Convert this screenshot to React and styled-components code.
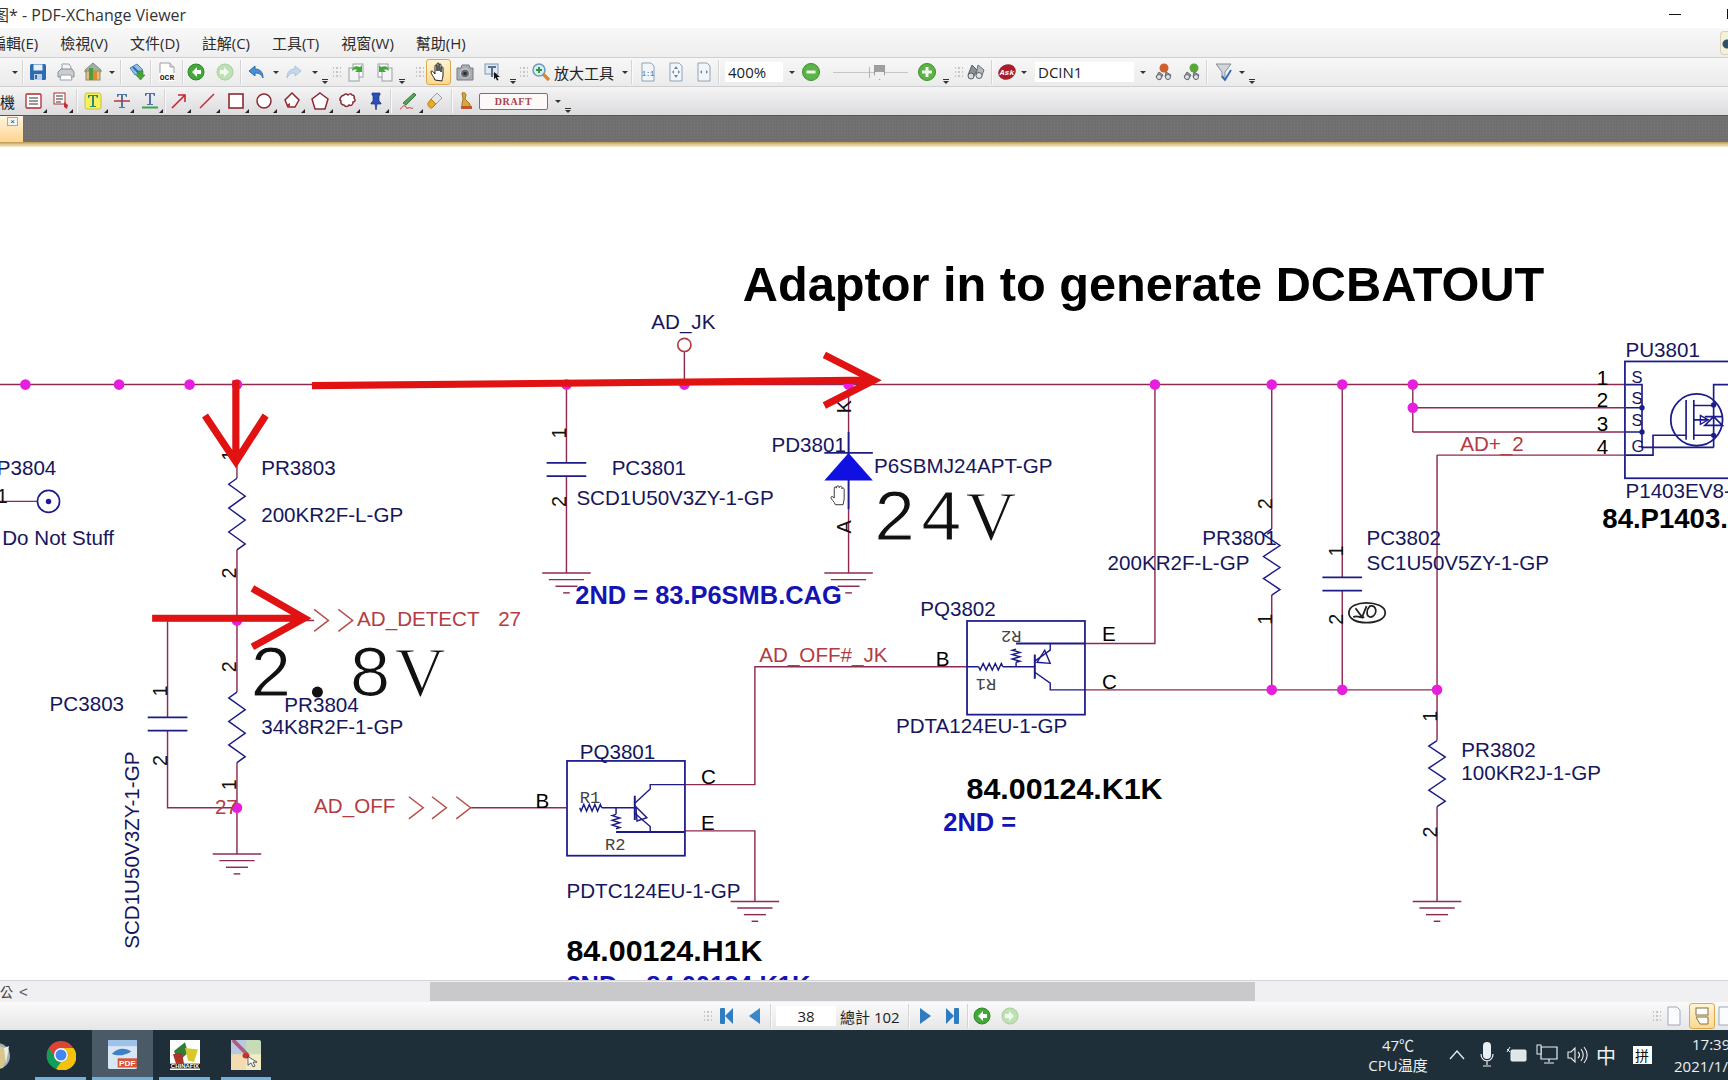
import styled, { createGlobalStyle } from 'styled-components'

const GlobalStyle = createGlobalStyle`
  html, body {
    margin: 0;
    padding: 0;
    background: #fff;
    overflow: hidden;
  }
  * {
    box-sizing: border-box;
  }
`

const uiFont = `"Open Sans", "Noto Sans CJK TC", sans-serif`

const Page = styled.div`
  width: 1728px;
  height: 1080px;
  display: flex;
  flex-direction: column;
  overflow: hidden;
  font-family: ${uiFont};
  color: #222;
`

const TitleBar = styled.div`
  height: 28px;
  flex: none;
  display: flex;
  align-items: center;
  background: #fff;
  overflow: hidden;
  font-family: "Open Sans", "Noto Sans CJK SC", sans-serif;
  font-size: 16px;
  color: #333;
`
const TitleText = styled.span`
  flex: none;
  width: 192px;
  margin-left: -7px;
  white-space: nowrap;
`
const Minimize = styled.span`
  flex: none;
  width: 12px;
  height: 1px;
  background: #111;
  margin-left: 1484px;
`
const MaxEdge = styled.span`
  flex: none;
  width: 2px;
  height: 10px;
  background: #111;
  margin-left: 46px;
`

const MenuBar = styled.div`
  height: 30px;
  flex: none;
  display: flex;
  align-items: center;
  gap: 22px;
  padding-left: 0;
  background: linear-gradient(#f8f8f8, #eeeeef);
  border-bottom: 1px solid #cfcfd2;
  font-size: 15px;
  color: #2b2b2b;
  overflow: hidden;
`
const MenuItem = styled.span`
  white-space: nowrap;
  &:first-child {
    margin-left: -9px;
  }
`
const HelpBadge = styled.span`
  margin-left: auto;
  width: 8px;
  height: 24px;
  border: 1px solid #d8d2b8;
  border-right: 0;
  border-radius: 4px 0 0 4px;
  background: radial-gradient(circle at 6px 12px, #31506b 0 4px, #f5f0d8 5px);
`

const Toolbar = styled.div`
  height: ${(p) => p.$h}px;
  flex: none;
  display: flex;
  align-items: center;
  overflow: hidden;
  background: ${(p) => p.$bg};
  border-bottom: ${(p) => (p.$line ? '1px solid #cfcfd2' : '0')};
`
const Gap = styled.span`
  flex: none;
  width: ${(p) => p.$w}px;
`
const Sep = styled.span`
  flex: none;
  width: 1px;
  height: 24px;
  background: #d4d4d6;
  box-shadow: 1px 0 0 #fafafa;
`
const ToolSlot = styled.span`
  position: relative;
  flex: none;
  width: ${(p) => p.$w}px;
  height: 26px;
  display: flex;
  align-items: center;
  justify-content: center;
  ${(p) =>
    p.$active &&
    `
    border: 1px solid #d9a94f;
    border-radius: 3px;
    background: linear-gradient(#fff4d6, #fcd88f);
  `}
  ${(p) =>
    p.$corner &&
    `
    &::after {
      content: '';
      position: absolute;
      right: 1px;
      bottom: 1px;
      border-left: 4px solid transparent;
      border-bottom: 4px solid #222;
    }
  `}
`
const Caret = styled.span`
  flex: none;
  width: ${(p) => p.$w || 8}px;
  height: 8px;
  display: flex;
  align-items: center;
  justify-content: center;
  &::before {
    content: '';
    border-left: 3px solid transparent;
    border-right: 3px solid transparent;
    border-top: 3px solid #333;
  }
`
const More = styled.span`
  flex: none;
  width: ${(p) => p.$w || 10}px;
  height: 26px;
  display: flex;
  flex-direction: column;
  align-items: center;
  justify-content: flex-end;
  padding-bottom: 1px;
  &::before {
    content: '';
    width: 6px;
    height: 1px;
    background: #333;
    margin-bottom: 1px;
  }
  &::after {
    content: '';
    border-left: 3px solid transparent;
    border-right: 3px solid transparent;
    border-top: 3px solid #333;
  }
`
const Grip = styled.span`
  flex: none;
  width: ${(p) => p.$w || 12}px;
  height: 14px;
  background-image: radial-gradient(#c6c6c8 1px, transparent 1.2px);
  background-size: 4px 4px;
  background-position: center;
  background-clip: content-box;
  padding: 0 ${(p) => ((p.$w || 12) - 8) / 2}px;
`
const ToolLabel = styled.span`
  flex: none;
  width: ${(p) => p.$w}px;
  font-size: 15px;
  white-space: nowrap;
  color: #222;
`
const Field = styled.span`
  flex: none;
  width: ${(p) => p.$w}px;
  height: 20px;
  display: flex;
  align-items: center;
  justify-content: ${(p) => (p.$center ? 'center' : 'flex-start')};
  padding-left: ${(p) => (p.$center ? 0 : 3)}px;
  background: #fff;
  font-size: 15px;
  color: #222;
`
const Slider = styled.span`
  position: relative;
  flex: none;
  width: ${(p) => p.$w}px;
  height: 20px;
  &::before {
    content: '';
    position: absolute;
    left: 0;
    right: 0;
    top: 10px;
    height: 1px;
    background: #c4c4c6;
  }
`
const SliderThumb = styled.span`
  position: absolute;
  left: 41px;
  top: 3px;
  width: 11px;
  height: 15px;
  background: linear-gradient(#9aa39a 0 45%, #f0f0f0 45%);
  border: 1px solid #9a9a9a;
  clip-path: polygon(0 0, 100% 0, 100% 65%, 50% 100%, 0 65%);
`
const SliderTick = styled.span`
  position: absolute;
  left: 36px;
  top: 5px;
  width: 1px;
  height: 11px;
  background: #b5b5b8;
`
const DraftStamp = styled.span`
  flex: none;
  width: 69px;
  height: 17px;
  display: flex;
  align-items: center;
  justify-content: center;
  border: 1.5px solid #b5565c;
  border-radius: 2px;
  background: #fdf9f8;
  font-family: "Liberation Serif", serif;
  font-weight: 700;
  font-size: 10px;
  letter-spacing: 0.6px;
  color: #a8434b;
`

const TabStrip = styled.div`
  height: 27px;
  flex: none;
  display: flex;
  background-color: #6f6f70;
  background-image: radial-gradient(#7a7a7b 0.6px, transparent 0.8px);
  background-size: 3px 3px;
  border-top: 1px solid #555;
`
const DocTab = styled.div`
  width: 23px;
  background: linear-gradient(#fff6e2, #fdd48d);
  padding: 1px 0 0 7px;
`
const TabClose = styled.span`
  display: flex;
  width: 11px;
  height: 9px;
  align-items: center;
  justify-content: center;
  background: #f4f4f4;
  border: 1px solid #a8a8a8;
  font-size: 8px;
  line-height: 1;
  font-family: "Liberation Sans", sans-serif;
  color: #333;
`
const GoldLine = styled.div`
  height: 5px;
  flex: none;
  background: linear-gradient(#b8974f, #d8bf85 40%, #f4ecd8);
`

const Canvas = styled.div`
  flex: none;
  height: 833px;
  background: #fff;
  overflow: hidden;
`
const Sheet = styled.svg`
  display: block;
`

const Wire = styled.path`
  fill: none;
  stroke: ${(p) => (p.$blue ? '#1c1c86' : '#8e2a52')};
  stroke-width: ${(p) => p.$sw || 1.3};
`
const Marker = styled.path`
  fill: none;
  stroke: #e01212;
  stroke-width: 6.5;
`
const Chevron = styled.path`
  fill: none;
  stroke: #b5524f;
  stroke-width: 1.4;
`
const Junction = styled.circle`
  fill: #e61fdc;
`
const Part = styled.rect`
  fill: none;
  stroke: #1c1c8c;
  stroke-width: 1.6;
`
const Label = styled.text`
  font-family: "Liberation Sans", sans-serif;
  font-size: ${(p) => p.$size || 18.7}px;
  font-weight: ${(p) => (p.$bold ? 700 : 400)};
  fill: ${(p) =>
    p.$tone === 'red'
      ? '#b23c42'
      : p.$tone === 'blue'
        ? '#1414b4'
        : p.$tone === 'black'
          ? '#000'
          : '#16165e'};
`
const PinNum = styled.text`
  font-family: "Liberation Sans", sans-serif;
  font-size: 18px;
  fill: #111;
  text-anchor: middle;
  dominant-baseline: central;
`
// white stroke over the fill thins the glyphs down to the hairline look of the reference
const BigVolt = styled.text`
  font-family: "Liberation Mono", monospace;
  font-size: 66px;
  letter-spacing: 2.5px;
  fill: #111;
  stroke: #fff;
  stroke-width: 1.1;
`
const VoltUnit = styled.tspan`
  font-family: "Liberation Serif", serif;
  font-size: 64px;
`
const Tiny = styled.text`
  font-family: "Liberation Mono", monospace;
  font-size: 15.5px;
  fill: #444;
`

const ScrollBar = styled.div`
  height: 22px;
  flex: none;
  display: flex;
  align-items: center;
  background: #f0eff1;
  border-top: 1px solid #d4d3d6;
`
const ScrollStub = styled.span`
  flex: none;
  width: 19px;
  font-size: 13px;
  color: #444;
  font-family: "Noto Sans CJK TC", sans-serif;
`
const ScrollLeft = styled.span`
  flex: none;
  width: 411px;
  font-size: 15px;
  color: #555;
  font-family: "Liberation Sans", sans-serif;
`
const ScrollThumb = styled.span`
  flex: none;
  width: 825px;
  height: 19px;
  background: #c9c8ca;
`

const StatusBar = styled.div`
  height: 28px;
  flex: none;
  display: flex;
  align-items: center;
  padding-left: 702px;
  overflow: hidden;
  background: linear-gradient(#fafafa, #e6e6e8);
`
const PageTotal = styled.span`
  flex: none;
  width: 60px;
  font-size: 15px;
  white-space: nowrap;
  color: #222;
`

const Taskbar = styled.div`
  height: 50px;
  flex: none;
  display: flex;
  background: #1f2f3a;
  overflow: hidden;
`
const StartStub = styled.span`
  flex: none;
  width: 35px;
  display: flex;
  align-items: center;
  padding-top: 2px;
`
const TaskButton = styled.span`
  flex: none;
  width: ${(p) => p.$w}px;
  margin-right: ${(p) => p.$gap || 0}px;
  display: flex;
  align-items: center;
  justify-content: center;
  padding-top: 2px;
  background: ${(p) => (p.$active ? '#4a5a67' : 'transparent')};
  border-bottom: 3px solid #76b0d8;
`
const Spacer = styled.span`
  flex: 1;
`
const TempBlock = styled.span`
  flex: none;
  width: 64px;
  margin-right: 15px;
  display: flex;
  flex-direction: column;
  align-items: center;
  justify-content: center;
  color: #e9eff3;
  font-size: 15px;
  line-height: 20px;
`
const TrayCell = styled.span`
  flex: none;
  width: ${(p) => p.$w}px;
  display: flex;
  align-items: center;
  justify-content: center;
  color: #eef2f5;
  font-size: 20px;
`
const ImeBox = styled.span`
  width: 19px;
  height: 18px;
  display: flex;
  align-items: center;
  justify-content: center;
  background: #fff;
  color: #111;
  font-size: 14px;
`
const Clock = styled.span`
  flex: none;
  width: 54px;
  margin-left: 16px;
  display: flex;
  flex-direction: column;
  justify-content: center;
  color: #e9eff3;
  font-size: 15px;
  line-height: 22px;
  white-space: nowrap;
`
const ClockTime = styled.span`
  margin-left: 18px;
`

const tiny = { fontFamily: 'Liberation Mono, monospace' }

const glyphs = {
  save: (
    <>
      <rect x="2" y="2" width="16" height="16" rx="1.5" fill="#2d6cb3" />
      <rect x="5.5" y="2.5" width="9" height="6" fill="#e8f0f8" />
      <rect x="6" y="12" width="8" height="6" fill="#bcd0e4" />
      <rect x="7" y="13" width="2" height="4" fill="#2d6cb3" />
    </>
  ),
  print: (
    <>
      <path d="M6 2h7l2 3v4H6z" fill="#f4f4f4" stroke="#9aa0a6" />
      <path d="M2 10l3-3h11l2 3v5H2z" fill="#c9cdd2" stroke="#8a8f96" />
      <path d="M5 13h10l1 5H4z" fill="#fff" stroke="#9aa0a6" />
    </>
  ),
  box: (
    <>
      <path d="M10 1l8 7v2H2V8z" fill="#9fb1a6" stroke="#7d8b82" />
      <rect x="3" y="9" width="14" height="9" fill="#d9c08a" stroke="#a08b55" />
      <rect x="6" y="6" width="4" height="12" fill="#4f9a3c" />
      <rect x="10" y="9" width="4" height="9" fill="#e08a2e" />
    </>
  ),
  scan: (
    <>
      <path d="M3 6l7-4 6 6-8 5z" fill="#8fc0e8" stroke="#4a84b8" />
      <path d="M6 5l6 6" stroke="#2d6cb3" strokeWidth="2" />
      <path d="M11 9h5v4h2l-4.500 5-4.500-5h2z" fill="#4ba33a" stroke="#2f7a22" strokeWidth=".6" />
    </>
  ),
  ocr: (
    <>
      <path d="M3 1h10l4 4v7H3z" fill="#fff" stroke="#9a9ea5" />
      <path d="M13 1v4h4" fill="#dfe4ea" stroke="#9a9ea5" />
      <rect x="2" y="11" width="16" height="8" fill="#fff" />
      <text x="10" y="18" textAnchor="middle" fontSize="8" fontWeight="700" fill="#222" style={tiny}>
        OCR
      </text>
    </>
  ),
  back: (
    <>
      <circle cx="10" cy="10" r="8" fill="#42a83a" stroke="#2f8728" />
      <path d="M11 5l-5 5 5 5v-3h4V8h-4z" fill="#fff" />
    </>
  ),
  forward: (
    <>
      <circle cx="10" cy="10" r="8" fill="#bfe0b4" stroke="#a8cf9c" />
      <path d="M9 5l5 5-5 5v-3H5V8h4z" fill="#f2f8ef" />
    </>
  ),
  undo: (
    <path d="M3 9l6-5v3c5 0 8 3 8 9-2-4-4-5-8-5v3z" fill="#4b8fd0" stroke="#2e6ba8" />
  ),
  redo: (
    <path d="M17 9l-6-5v3C6 7 3 10 3 16c2-4 4-5 8-5v3z" fill="#c4d9ee" stroke="#a8c2dc" />
  ),
  copyLeft: (
    <>
      <rect x="7" y="2" width="10" height="13" fill="#fff" stroke="#9aa0a6" />
      <rect x="3" y="6" width="10" height="13" fill="#f2f4f6" stroke="#9aa0a6" />
      <path d="M6 9c0-4 4-6 8-4l2-2v7h-7l2-2c-2-1-4 0-5 1z" fill="#43a83a" />
    </>
  ),
  copyRight: (
    <>
      <rect x="3" y="2" width="10" height="13" fill="#fff" stroke="#9aa0a6" />
      <rect x="7" y="6" width="10" height="13" fill="#f2f4f6" stroke="#9aa0a6" />
      <path d="M14 9c0-4-4-6-8-4L4 3v7h7L9 8c2-1 4 0 5 1z" fill="#43a83a" />
    </>
  ),
  hand: (
    <path
      d="M6 18c-1-3-4-6-4-8 0-1.500 1.500-1 2.500 0L6 12V4c0-1.500 2-1.500 2 0v5-7c0-1.500 2-1.500 2 0v7-6c0-1.500 2-1.500 2 0v7-4c0-1.500 2-1.500 2 0v7c0 3-1 4-1 6z"
      fill="#fff"
      stroke="#222"
      strokeWidth="1"
    />
  ),
  camera: (
    <>
      <path d="M2 6h4l1-3h7l1 3h3v12H2z" fill="#a9adb3" stroke="#777b82" />
      <circle cx="10" cy="11.500" r="4.500" fill="#666a70" stroke="#ddd" />
      <circle cx="10" cy="11.500" r="1.800" fill="#2c2e32" />
    </>
  ),
  select: (
    <>
      <rect x="2" y="2" width="13" height="10" fill="#dfe9f3" stroke="#7e98b4" />
      <path d="M5 4h8v2h-3v9H8V6H5z" fill="#5b7188" />
      <path d="M11 10l6 5h-3l1.500 3-1.500.6-1.500-3-1.500 2z" fill="#111" />
    </>
  ),
  zoomIn: (
    <>
      <path d="M11 11l7 7" stroke="#d98b2b" strokeWidth="3.400" />
      <circle cx="8" cy="8" r="6" fill="#d6ecf6" stroke="#6e9bb5" strokeWidth="1.500" />
      <path d="M5 8h6M8 5v6" stroke="#2f9a34" strokeWidth="2" />
    </>
  ),
  pageOne: (
    <>
      <path d="M4 1h9l3 3v15H4z" fill="#f2f6fa" stroke="#8fa3b5" />
      <text x="10" y="14" textAnchor="middle" fontSize="7" fill="#36618a" style={tiny}>
        1:1
      </text>
    </>
  ),
  pageFit: (
    <>
      <path d="M4 1h9l3 3v15H4z" fill="#f2f6fa" stroke="#8fa3b5" />
      <path d="M10 4l2 3H8zM10 16l-2-3h4zM6 10l2-2v4zM14 10l-2-2v4z" fill="#6a87a2" />
    </>
  ),
  pageWide: (
    <>
      <path d="M4 1h9l3 3v15H4z" fill="#f2f6fa" stroke="#8fa3b5" />
      <path d="M6 10l2-2v4zM14 10l-2-2v4z" fill="#6a87a2" />
    </>
  ),
  minus: (
    <>
      <circle cx="10" cy="10" r="8.500" fill="#5cb347" stroke="#3d8f2e" />
      <rect x="5.500" y="8.500" width="9" height="3" fill="#e9f6e4" />
    </>
  ),
  plus: (
    <>
      <circle cx="10" cy="10" r="8.500" fill="#5cb347" stroke="#3d8f2e" />
      <path d="M5 10h10M10 5v10" stroke="#f1faee" strokeWidth="3" />
    </>
  ),
  binoc: (
    <>
      <path d="M6 3l5 5-4 8-5-3z" fill="#8c9094" stroke="#5c6065" />
      <path d="M12 3l6 5-3 8-5-3z" fill="#b5b9bd" stroke="#6c7075" />
      <circle cx="5" cy="14" r="3" fill="#d6dade" stroke="#5c6065" />
      <circle cx="13" cy="13.500" r="3" fill="#e3e6e9" stroke="#5c6065" />
    </>
  ),
  ask: (
    <>
      <ellipse cx="10" cy="10" rx="9" ry="7.500" transform="rotate(-25 10 10)" fill="#a81f2c" />
      <text x="10" y="13" textAnchor="middle" fontSize="8" fontWeight="700" fontStyle="italic" fill="#fff" style={tiny}>
        Ask
      </text>
    </>
  ),
  binocRed: (
    <>
      <circle cx="10" cy="6" r="4.500" fill="#d2602e" />
      <path d="M5 10l4 3-3 5-4-3zM12 10l5 3-3 5-3-3z" fill="#9aa0a6" stroke="#666a70" />
      <circle cx="5" cy="15" r="2.500" fill="#dfe3e7" stroke="#666a70" />
      <circle cx="14" cy="15" r="2.500" fill="#dfe3e7" stroke="#666a70" />
    </>
  ),
  binocGreen: (
    <>
      <circle cx="12" cy="6" r="4.500" fill="#58a83c" />
      <path d="M5 10l4 3-3 5-4-3zM12 10l5 3-3 5-3-3z" fill="#9aa0a6" stroke="#666a70" />
      <circle cx="5" cy="15" r="2.500" fill="#dfe3e7" stroke="#666a70" />
      <circle cx="14" cy="15" r="2.500" fill="#dfe3e7" stroke="#666a70" />
    </>
  ),
  funnel: (
    <>
      <path d="M2 2h15l-6 8v8l-3-2v-6z" fill="#d2d6da" stroke="#8a8f96" />
      <path d="M8 14l3 4 6-10" fill="none" stroke="#2d6cb3" strokeWidth="1.800" />
    </>
  ),
  note: (
    <>
      <rect x="2" y="3" width="15" height="14" rx="1" fill="#fff" stroke="#b02a30" strokeWidth="1.300" />
      <path d="M5 7h9M5 10h9M5 13h9" stroke="#333" />
    </>
  ),
  noteArrow: (
    <>
      <rect x="3" y="2" width="11" height="11" fill="#fff" stroke="#b02a30" />
      <path d="M5 5h7M5 8h7M5 11h5" stroke="#333" />
      <path d="M13 11l4 3-1 4-3-2z" fill="#c22f36" />
    </>
  ),
  textHighlight: (
    <>
      <rect x="2" y="2" width="16" height="16" rx="2" fill="#f7f05a" stroke="#c7c23e" />
      <path d="M5 4h10v3h-1l-1-2h-2v10h2v1H7v-1h2V5H7L6 7H5z" fill="#2f8a6e" />
    </>
  ),
  textStrike: (
    <>
      <path d="M5 3h10v3h-1l-1-2h-2v12h2v1H7v-1h2V4H7L6 6H5z" fill="#4f74a8" />
      <path d="M2 10h16" stroke="#c2323a" strokeWidth="1.500" />
    </>
  ),
  textUnder: (
    <>
      <path d="M5 2h10v3h-1l-1-2h-2v10h2v1H7v-1h2V3H7L6 5H5z" fill="#4f74a8" />
      <path d="M2 16.500h16" stroke="#3fa34a" strokeWidth="2" />
    </>
  ),
  arrow: <path d="M3 17L16 4M9 4h7v7" fill="none" stroke="#c8262e" strokeWidth="1.600" />,
  line: <path d="M3 17L17 3" stroke="#c8262e" strokeWidth="1.500" />,
  rect: <rect x="3" y="3" width="14" height="14" fill="#fff" stroke="#8a2a30" strokeWidth="1.600" />,
  ellipse: <circle cx="10" cy="10" r="7" fill="#fff" stroke="#8a2a30" strokeWidth="1.500" />,
  polyline: (
    <>
      <path d="M10 2l7 7-4 7H6l-3-7z" fill="#fff" stroke="#8a2a30" strokeWidth="1.500" />
      <path d="M4 14l4-2v4z" fill="#c8262e" />
    </>
  ),
  pentagon: <path d="M10 2l8 6-3 10H5L2 8z" fill="#fff" stroke="#8a2a30" strokeWidth="1.500" />,
  cloud: (
    <path
      d="M6 4c2-2 3-1 4 0 1-1 3-2 4 0 2 0 3 2 2 3 2 2 1 4-1 4 0 3-2 4-4 3-1 2-4 2-5 0-2 0-4-2-3-4-2-1-1-5 3-6z"
      fill="#fff"
      stroke="#8a2a30"
      strokeWidth="1.500"
    />
  ),
  pin: (
    <path d="M6 2h8v2l-1 1v5l2 2v1h-4l-1 6-1-6H5v-1l2-2V5L6 4z" fill="#2d4fb5" stroke="#1d3585" strokeWidth=".7" />
  ),
  pencil: (
    <>
      <path d="M16 2l2 2-10 10-3-2z" fill="#58a05a" stroke="#3c7a3e" />
      <path d="M2 18c3-1 2-4 5-3s-1 3 3 2 2 1 5 0" fill="none" stroke="#c2323a" />
    </>
  ),
  eraser: (
    <>
      <path d="M13 2l5 5-6 6-5-5z" fill="#e6e6e6" stroke="#a0a0a0" />
      <path d="M7 8l5 5-4 4c-2 1-5-3-4-5z" fill="#e8a92a" stroke="#b8801a" />
    </>
  ),
  stamp: (
    <>
      <path d="M6 2c2-1 4 0 4 2l-1 4 5 5v3H6v-3l1-5z" fill="#d8a63a" stroke="#a17820" />
      <rect x="5" y="15" width="11" height="3" fill="#c2562f" />
    </>
  ),
  first: (
    <>
      <rect x="3" y="2" width="5" height="16" rx="1" fill="#2f7cc2" />
      <path d="M16 2v16L8 10z" fill="#2f7cc2" />
    </>
  ),
  prev: <path d="M15 2v16L4 10z" fill="#3a86c8" />,
  next: <path d="M5 2v16l11-8z" fill="#2f7cc2" />,
  last: (
    <>
      <rect x="12" y="2" width="5" height="16" rx="1" fill="#2f7cc2" />
      <path d="M4 2v16l8-8z" fill="#2f7cc2" />
    </>
  ),
  page: <path d="M4 1h9l3 3v15H4z" fill="#fbfcfe" stroke="#9aa9b8" />,
  pageSplit: (
    <>
      <rect x="4" y="2" width="12" height="7" fill="#fff" stroke="#7d6f48" />
      <path d="M4 11h12v7H8z" fill="#fff" stroke="#7d6f48" />
    </>
  ),
}

function Glyph({ name }) {
  return (
    <svg width="20" height="20" viewBox="0 0 20 20">
      {glyphs[name]}
    </svg>
  )
}

function Tool({ w, name, active, corner }) {
  return (
    <ToolSlot $w={w} $active={active} $corner={corner}>
      <Glyph name={name} />
    </ToolSlot>
  )
}

function MainToolbar() {
  return (
    <Toolbar $h={29} $bg="linear-gradient(#f7f7f7, #ebebec)" $line>
      <Gap $w={10} />
      <Caret $w={9} />
      <Gap $w={3} />
      <Sep />
      <Tool w={30} name="save" />
      <Tool w={26} name="print" />
      <Tool w={28} name="box" />
      <Caret $w={10} />
      <Gap $w={3} />
      <Sep />
      <Gap $w={3} />
      <Tool w={26} name="scan" />
      <Sep />
      <Tool w={31} name="ocr" />
      <Sep />
      <Tool w={26} name="back" />
      <Gap $w={3} />
      <Tool w={26} name="forward" />
      <Gap $w={2} />
      <Sep />
      <Tool w={30} name="undo" />
      <Caret $w={9} />
      <Gap $w={2} />
      <Tool w={24} name="redo" />
      <Gap $w={5} />
      <Caret $w={8} />
      <More $w={12} />
      <Grip />
      <Tool w={26} name="copyLeft" />
      <Gap $w={3} />
      <Tool w={26} name="copyRight" />
      <More $w={8} />
      <Gap $w={8} />
      <Grip />
      <Tool w={25} name="hand" active />
      <Tool w={28} name="camera" />
      <Tool w={27} name="select" />
      <More $w={14} />
      <Grip $w={8} />
      <Tool w={26} name="zoomIn" />
      <ToolLabel $w={59}>放大工具</ToolLabel>
      <Gap $w={7} />
      <Caret $w={9} />
      <Gap $w={2} />
      <Sep />
      <Tool w={32} name="pageOne" />
      <Tool w={24} name="pageFit" />
      <Gap $w={3} />
      <Tool w={25} name="pageWide" />
      <Gap $w={2} />
      <Sep />
      <Gap $w={6} />
      <Field $w={58}>400%</Field>
      <Gap $w={4} />
      <Caret $w={10} />
      <Gap $w={1} />
      <Tool w={26} name="minus" />
      <Gap $w={9} />
      <Slider $w={75}>
        <SliderTick />
        <SliderThumb />
      </Slider>
      <Gap $w={6} />
      <Tool w={26} name="plus" />
      <More $w={12} />
      <Grip $w={13} />
      <Tool w={22} name="binoc" />
      <Gap $w={4} />
      <Sep />
      <Gap $w={2} />
      <Tool w={26} name="ask" />
      <Caret $w={8} />
      <Gap $w={7} />
      <Field $w={99}>DCIN1</Field>
      <Gap $w={4} />
      <Caret $w={10} />
      <Gap $w={2} />
      <Tool w={28} name="binocRed" />
      <Tool w={28} name="binocGreen" />
      <Sep />
      <Gap $w={3} />
      <Tool w={28} name="funnel" />
      <Caret $w={8} />
      <More $w={12} />
    </Toolbar>
  )
}

function AnnotateToolbar() {
  return (
    <Toolbar $h={28} $bg="linear-gradient(#f4f4f5, #dcdcde)">
      <ToolLabel $w={16}>機</ToolLabel>
      <Gap $w={4} />
      <Tool w={28} name="note" corner />
      <Tool w={26} name="noteArrow" corner />
      <Gap $w={2} />
      <Sep />
      <Tool w={32} name="textHighlight" corner />
      <Tool w={26} name="textStrike" corner />
      <Tool w={29} name="textUnder" corner />
      <Sep />
      <Tool w={27} name="arrow" corner />
      <Tool w={29} name="line" corner />
      <Tool w={29} name="rect" corner />
      <Tool w={28} name="ellipse" corner />
      <Tool w={28} name="polyline" corner />
      <Tool w={28} name="pentagon" corner />
      <Tool w={27} name="cloud" corner />
      <Tool w={29} name="pin" corner />
      <Sep />
      <Tool w={33} name="pencil" corner />
      <Tool w={20} name="eraser" />
      <Gap $w={7} />
      <Sep />
      <Tool w={27} name="stamp" />
      <DraftStamp>DRAFT</DraftStamp>
      <Gap $w={5} />
      <Caret $w={9} />
      <More $w={12} />
    </Toolbar>
  )
}

// builds a zigzag between two points, used for every resistor on the sheet
function zig(x1, y1, x2, y2, amp, n) {
  const dx = (x2 - x1) / (n * 2)
  const dy = (y2 - y1) / (n * 2)
  const len = Math.hypot(dx, dy)
  const px = (-dy / len) * amp
  const py = (dx / len) * amp
  let d = `M${x1} ${y1}`
  for (let i = 0; i < n * 2; i++) {
    const sign = i % 2 === 0 ? 1 : -1
    d += `L${x1 + dx * (i + 0.5) + px * sign} ${y1 + dy * (i + 0.5) + py * sign}`
  }
  return d + `L${x2} ${y2}`
}

function Ground({ x, y }) {
  return (
    <>
      <Wire d={`M${x - 22} ${y}h44`} />
      <Wire d={`M${x - 16} ${y + 6}h32`} />
      <Wire d={`M${x - 10} ${y + 12}h20`} />
      <Wire d={`M${x - 3} ${y + 18}h6`} />
    </>
  )
}

function Cap({ x, y, gap = 12 }) {
  return (
    <>
      <Wire $blue $sw={1.6} d={`M${x - 18} ${y}h36`} />
      <Wire $blue $sw={1.6} d={`M${x - 18} ${y + gap}h36`} />
    </>
  )
}

function Pin({ x, y, children }) {
  return (
    <PinNum x={x} y={y} transform={`rotate(-90 ${x} ${y})`}>
      {children}
    </PinNum>
  )
}

function Chev({ x, y }) {
  return <Chevron d={`M${x} ${y - 10}L${x + 13} ${y}L${x} ${y + 10}`} />
}

const junctions = [
  [23, 349], [108, 349], [172, 349], [215, 349], [514, 349], [621, 349], [770, 349],
  [1048, 349], [1154, 349], [1218, 349], [1282, 349], [1282, 370], [215, 563],
  [215, 733], [1154, 626], [1218, 626], [1304, 626],
]

function Schematic() {
  return (
    <Sheet width="1728" height="833" viewBox="0 133.4 1568 755.9">
      <Label x="674" y="273" $size={44.2} $bold $tone="black">
        Adaptor in to generate DCBATOUT
      </Label>

      {/* main rail and branches */}
      <Wire d="M0 349H1474" />
      <Wire d="M215 349V434M215 499V628M215 692V775" />
      <Wire d="M152 563H285M152 563V651M152 663V733H215" />
      <Wire d="M621 319V349" />
      <Wire d="M514 349V420M514 432V520" />
      <Wire d="M770 349V520" />
      <Wire d="M427 733H514" />
      <Wire d="M621 712H685V605H877" />
      <Wire d="M621 754H685V818" />
      <Wire d="M985 584H1048V349" />
      <Wire d="M985 626H1304" />
      <Wire d="M1154 349V480M1154 540V626" />
      <Wire d="M1218 349V524M1218 536V626" />
      <Wire d="M1304 413V672M1304 732V818" />
      <Wire d="M1282 349V392M1282 370H1474M1282 392H1474M1304 413H1474" />
      <Wire d="M0 455H34" />

      <Wire $blue d={zig(215, 434, 215, 499, 7.5, 3)} />
      <Wire $blue d={zig(215, 628, 215, 692, 7.5, 3)} />
      <Wire $blue d={zig(1154, 480, 1154, 540, 7.5, 3)} />
      <Wire $blue d={zig(1304, 672, 1304, 732, 7.5, 3)} />

      <Cap x={152} y={651} />
      <Cap x={514} y={420} />
      <Cap x={1218} y={524} />

      <Ground x={215} y={775} />
      <Ground x={514} y={520} />
      <Ground x={770} y={520} />
      <Ground x={685} y={818} />
      <Ground x={1304} y={818} />

      {junctions.map(([cx, cy]) => (
        <Junction key={`${cx}-${cy}`} cx={cx} cy={cy} r="4.800" />
      ))}

      {/* left side parts */}
      <circle cx="621" cy="313" r="6" fill="#fff" stroke="#b23c42" strokeWidth="1.500" />
      <circle cx="44" cy="455" r="10" fill="#fff" stroke="#1c1c8c" strokeWidth="1.500" />
      <circle cx="44" cy="455" r="2.500" fill="#1c1c8c" />

      <Label x="-3" y="431">P3804</Label>
      <PinNum x="2" y="450">1</PinNum>
      <Label x="2" y="495">Do Not Stuff</Label>
      <Label x="237" y="431">PR3803</Label>
      <Label x="237" y="474">200KR2F-L-GP</Label>
      <Label x="258" y="646">PR3804</Label>
      <Label x="237" y="666">34K8R2F-1-GP</Label>
      <Label x="45" y="645">PC3803</Label>
      <Label x="126" y="861" transform="rotate(-90 126 861)">SCD1U50V3ZY-1-GP</Label>
      <Pin x={208} y={413}>1</Pin>
      <Pin x={208} y={520}>2</Pin>
      <Pin x={208} y={605}>2</Pin>
      <Pin x={208} y={712}>1</Pin>
      <Pin x={145} y={627}>1</Pin>
      <Pin x={145} y={690}>2</Pin>
      <Label x="195" y="739" $tone="red">27</Label>

      <Chev x={285} y={563} />
      <Chev x={307} y={563} />
      <Label x="324" y="568" $tone="red">AD_DETECT</Label>
      <Label x="452" y="568" $tone="red">27</Label>
      <Label x="285" y="738" $tone="red">AD_OFF</Label>
      <Chev x={371} y={733} />
      <Chev x={392} y={733} />
      <Chev x={414} y={733} />

      <Label x="591" y="299">AD_JK</Label>
      <Label x="555" y="431">PC3801</Label>
      <Label x="523" y="458">SCD1U50V3ZY-1-GP</Label>
      <Pin x={507} y={393}>1</Pin>
      <Pin x={507} y={455}>2</Pin>
      <Label x="522" y="548" $size={23.1} $bold $tone="blue">2ND = 83.P6SMB.CAG</Label>

      {/* diode */}
      <Wire $blue $sw={1.6} d="M770 392V462" />
      <Wire $blue $sw={1.6} d="M748 411H792" />
      <path d="M770 411L792 436H748Z" fill="#1010e0" />
      <Label x="700" y="410">PD3801</Label>
      <Label x="793" y="429">P6SBMJ24APT-GP</Label>
      <Pin x={766} y={369}>K</Pin>
      <Pin x={766} y={478}>A</Pin>
      <path
        d="M758 458c-1-3-4-5-4-6.500 0-1.500 2-1 3 .5v-9c0-1.500 2-1.500 2 0v-1c0-1.500 2.500-1.500 2.500 0v.5c0-1.500 2.500-1.500 2.500 0v1c0-1 2-1 2 .5v9c0 2-1 3-1 5z"
        fill="#fff"
        stroke="#222"
        strokeWidth="0.800"
      />
      <BigVolt x="792" y="490">
        24<VoltUnit>V</VoltUnit>
      </BigVolt>

      <BigVolt x="226" y="632">2</BigVolt>
      <circle cx="288" cy="628" r="5" fill="#111" />
      <BigVolt x="316" y="632">
        8<VoltUnit>V</VoltUnit>
      </BigVolt>

      {/* PQ3801 */}
      <Part x="514.500" y="690.500" width="107" height="86" />
      <Label x="526" y="689">PQ3801</Label>
      <Wire $blue d={zig(526, 733, 546, 733, 3, 4)} />
      <Wire $blue d="M546 733H576M559 733V739" />
      <Wire $blue d={zig(559, 739, 559, 752, 3.500, 3)} />
      <Wire $blue d="M559 755H621M576 722V744" $sw={1.8} />
      <Wire $blue d="M576 729L590 716V712H621M576 738L590 750V755" />
      <path d="M577 732L587 742L578 745Z" fill="none" stroke="#1c1c86" strokeWidth="1.300" />
      <Tiny x="526" y="729">R1</Tiny>
      <Tiny x="549" y="771">R2</Tiny>
      <Label x="486" y="733" $tone="black">B</Label>
      <Label x="636" y="711" $tone="black">C</Label>
      <Label x="636" y="753" $tone="black">E</Label>
      <Label x="689" y="601" $tone="red">AD_OFF#_JK</Label>
      <Label x="514" y="815">PDTC124EU-1-GP</Label>
      <Label x="514" y="872" $size={27.6} $bold $tone="black">84.00124.H1K</Label>
      <Label x="514" y="902" $size={23.1} $bold $tone="blue">2ND = 84.00124.K1K</Label>

      {/* PQ3802 */}
      <Part x="877.500" y="563.500" width="107" height="85" />
      <Label x="835" y="559">PQ3802</Label>
      <Wire $blue d={zig(888, 605, 910, 605, 3, 4)} />
      <Wire $blue d="M877 605H888M910 605H939M922 605V601" />
      <Wire $blue d={zig(922, 601, 922, 589, 3.500, 3)} />
      <Wire $blue d="M922 584H985M939 594V616" $sw={1.8} />
      <Wire $blue d="M939 600L953 590V584M939 610L953 620V626H985" />
      <path d="M953 602L941 601L948 590Z" fill="none" stroke="#1c1c86" strokeWidth="1.300" />
      <Tiny x="927" y="573" transform="rotate(180 927 573)">R2</Tiny>
      <Tiny x="904" y="616" transform="rotate(180 904 616)">R1</Tiny>
      <Label x="849" y="604" $tone="black">B</Label>
      <Label x="1000" y="582" $tone="black">E</Label>
      <Label x="1000" y="625" $tone="black">C</Label>
      <Label x="813" y="665">PDTA124EU-1-GP</Label>
      <Label x="877" y="725" $size={27.6} $bold $tone="black">84.00124.K1K</Label>
      <Label x="856" y="754" $size={23.1} $bold $tone="blue">2ND =</Label>

      {/* right side passives */}
      <Label x="1091" y="495">PR3801</Label>
      <Label x="1005" y="517">200KR2F-L-GP</Label>
      <Pin x={1148} y={457}>2</Pin>
      <Pin x={1148} y={562}>1</Pin>
      <Label x="1240" y="495">PC3802</Label>
      <Label x="1240" y="517">SC1U50V5ZY-1-GP</Label>
      <Pin x={1212} y={500}>1</Pin>
      <Pin x={1212} y={562}>2</Pin>
      <path
        d="M1224 556c0-6 8-9 16-9s17 3 17 9-8 9-17 9-16-3-16-9zM1230 552l6 8 4-10M1243 550c6-2 8 8 1 10-5 0-4-7-1-10zM1228 560c4-2 6 1 10 0"
        fill="none"
        stroke="#222"
        strokeWidth="1.600"
      />
      <Pin x={1298} y={650}>1</Pin>
      <Pin x={1298} y={755}>2</Pin>
      <Label x="1326" y="687">PR3802</Label>
      <Label x="1326" y="708">100KR2J-1-GP</Label>
      <Label x="1325" y="409" $tone="red">AD+_2</Label>

      {/* PU3801 */}
      <Part x="1474.500" y="328" width="120" height="106" />
      <Label x="1475" y="324">PU3801</Label>
      <Label x="1449" y="349" $tone="black">1</Label>
      <Label x="1449" y="369" $tone="black">2</Label>
      <Label x="1449" y="391" $tone="black">3</Label>
      <Label x="1449" y="412" $tone="black">4</Label>
      <Label x="1480.500" y="348" $size={15}>S</Label>
      <Label x="1480.500" y="367" $size={15}>S</Label>
      <Label x="1480.500" y="387" $size={15}>S</Label>
      <Label x="1480.500" y="410" $size={15}>G</Label>
      <Wire $blue $sw={1.5} d="M1475 349H1490V406H1555M1475 370H1490M1475 392H1490" />
      <Wire $blue $sw={1.5} d="M1475 413H1500V395H1530M1530 363V399M1537 363V399" />
      <Wire $blue $sw={1.5} d="M1555 406V349H1568M1537 368H1555M1537 395H1555M1537 381H1550" />
      <circle cx="1539.600" cy="381" r="23.500" fill="none" stroke="#1c1c8c" strokeWidth="1.600" />
      <path d="M1547 378H1563M1555 378L1547 386H1563Z" fill="none" stroke="#1c1c8c" strokeWidth="1.500" />
      <path d="M1543 377V385L1550 381Z" fill="none" stroke="#1c1c8c" strokeWidth="1.300" />
      <circle cx="1490" cy="370" r="2.400" fill="#1c1c8c" />
      <circle cx="1490" cy="392" r="2.400" fill="#1c1c8c" />
      <circle cx="1555" cy="367.500" r="2.400" fill="#1c1c8c" />
      <circle cx="1555" cy="395" r="2.400" fill="#1c1c8c" />
      <Label x="1475" y="452">P1403EV8-</Label>
      <Label x="1454" y="479" $size={25} $bold $tone="black">84.P1403.</Label>

      {/* hand drawn red arrows over the sheet */}
      <Marker d="M283 350L793 345M748 322L793 345L748 368" />
      <Marker d="M214 345V419M186 377L214 419L241 377" />
      <Marker d="M138 561H276M229 534L276 561L229 587" />
    </Sheet>
  )
}

function PinnedStub() {
  return (
    <svg width="11" height="28" viewBox="0 0 11 28">
      <circle cx="-3" cy="14" r="13" fill="#9fb0b4" />
      <path d="M-2 3L9 8L3 26L-4 27Z" fill="#d8c68a" />
      <path d="M4 6L9 4L6 22Z" fill="#e8ecef" />
    </svg>
  )
}

function ChromeIcon() {
  return (
    <svg width="30" height="30" viewBox="0 0 30 30">
      <circle cx="15" cy="15" r="14" fill="#db4437" />
      <path d="M3 8L9 18A7 7 0 0 0 15 22L10 29A14 14 0 0 1 3 8Z" fill="#0f9d58" />
      <path d="M15 8H27.500A14 14 0 0 1 10 29L15 22A7 7 0 0 0 21 11Z" fill="#f4c20d" />
      <circle cx="15" cy="15" r="7" fill="#fff" />
      <circle cx="15" cy="15" r="5.500" fill="#4285f4" />
    </svg>
  )
}

function PdfIcon() {
  return (
    <svg width="29" height="29" viewBox="0 0 30 38" preserveAspectRatio="none">
      <rect width="30" height="38" rx="2" fill="#d9e6f4" />
      <rect width="30" height="8" fill="#9fc3e8" />
      <path d="M4 18c6-8 14-8 20-3-6 5-14 7-20 3z" fill="#3f7fc8" />
      <rect x="10" y="24" width="20" height="12" fill="#d4553a" />
      <text x="20" y="33.500" textAnchor="middle" fontSize="8.500" fontWeight="700" fill="#fff" fontFamily="Liberation Sans, sans-serif">
        PDF
      </text>
    </svg>
  )
}

function ChinaFixIcon() {
  return (
    <svg width="30" height="30" viewBox="0 0 30 38" preserveAspectRatio="none">
      <rect width="30" height="38" fill="#fff" />
      <path d="M4 14L15 3L18 16L8 28Z" fill="#2f7d38" />
      <path d="M15 10L28 12L24 28L18 26Z" fill="#d8c92a" />
      <path d="M3 18L12 16L14 30H6Z" fill="#b0322a" />
      <rect y="30" width="30" height="6" fill="#111" />
      <text x="15" y="35.500" textAnchor="middle" fontSize="6" fontWeight="700" fill="#fff" fontFamily="Liberation Sans, sans-serif">
        CHINAFIX
      </text>
    </svg>
  )
}

function PaintIcon() {
  return (
    <svg width="30" height="30" viewBox="0 0 30 38" preserveAspectRatio="none">
      <rect width="30" height="38" rx="2" fill="#c6dcb8" />
      <rect width="15" height="18" fill="#b9c8e4" />
      <rect y="18" width="15" height="20" fill="#f2dcb0" />
      <rect x="15" y="18" width="15" height="20" fill="#f0ecc8" />
      <path d="M2 0L16 18" stroke="#b25a78" strokeWidth="4" />
      <circle cx="15" cy="20" r="3.500" fill="#c8302a" />
      <path d="M17 21v11l3-3 2 5 2-1-2-5h4z" fill="#fff" stroke="#222" strokeWidth=".8" />
    </svg>
  )
}

function App() {
  return (
    <Page>
      <GlobalStyle />
      <TitleBar>
        <TitleText>图* - PDF-XChange Viewer</TitleText>
        <Minimize />
        <MaxEdge />
      </TitleBar>
      <MenuBar>
        <MenuItem>編輯(E)</MenuItem>
        <MenuItem>檢視(V)</MenuItem>
        <MenuItem>文件(D)</MenuItem>
        <MenuItem>註解(C)</MenuItem>
        <MenuItem>工具(T)</MenuItem>
        <MenuItem>視窗(W)</MenuItem>
        <MenuItem>幫助(H)</MenuItem>
        <HelpBadge />
      </MenuBar>
      <MainToolbar />
      <AnnotateToolbar />
      <TabStrip>
        <DocTab>
          <TabClose>×</TabClose>
        </DocTab>
      </TabStrip>
      <GoldLine />
      <Canvas>
        <Schematic />
      </Canvas>
      <ScrollBar>
        <ScrollStub>公</ScrollStub>
        <ScrollLeft>&lt;</ScrollLeft>
        <ScrollThumb />
      </ScrollBar>
      <StatusBar>
        <Grip />
        <Tool w={26} name="first" />
        <Tool w={30} name="prev" />
        <Sep />
        <Gap $w={5} />
        <Field $w={60} $center>38</Field>
        <Gap $w={4} />
        <PageTotal>總計 102</PageTotal>
        <Gap $w={8} />
        <Sep />
        <Tool w={32} name="next" />
        <Tool w={22} name="last" />
        <Gap $w={4} />
        <Sep />
        <Tool w={28} name="back" />
        <Tool w={28} name="forward" />
        <Gap $w={627} />
        <Grip />
        <Tool w={22} name="page" />
        <Gap $w={4} />
        <Tool w={26} name="pageSplit" active />
        <Tool w={20} name="page" />
      </StatusBar>
      <Taskbar>
        <StartStub>
          <PinnedStub />
        </StartStub>
        <TaskButton $w={51} $gap={6}>
          <ChromeIcon />
        </TaskButton>
        <TaskButton $w={61} $gap={6} $active>
          <PdfIcon />
        </TaskButton>
        <TaskButton $w={51} $gap={11}>
          <ChinaFixIcon />
        </TaskButton>
        <TaskButton $w={50}>
          <PaintIcon />
        </TaskButton>
        <Spacer />
        <TempBlock>
          <span>47℃</span>
          <span>CPU温度</span>
        </TempBlock>
        <TrayCell $w={24}>
          <svg width="18" height="18" viewBox="0 0 18 18">
            <path d="M2 13L9 5l7 8" fill="none" stroke="#e9eff3" strokeWidth="1.300" />
          </svg>
        </TrayCell>
        <Gap $w={3} />
        <TrayCell $w={30}>
          <svg width="16" height="28" viewBox="0 0 16 28">
            <rect x="4" y="1" width="8" height="17" rx="4" fill="#e9eff3" />
            <path d="M2 13c0 9 12 9 12 0M8 20v4M4 25h8" fill="none" stroke="#e9eff3" strokeWidth="1.200" />
          </svg>
        </TrayCell>
        <TrayCell $w={30}>
          <svg width="22" height="18" viewBox="0 0 22 18">
            <rect x="5" y="4" width="15" height="11" rx="1" fill="#dfe6ea" stroke="#e9eff3" />
            <path d="M1 3l3 3M4 1l-3 5" stroke="#e9eff3" />
          </svg>
        </TrayCell>
        <TrayCell $w={30}>
          <svg width="22" height="22" viewBox="0 0 22 22">
            <path d="M5 3h16v12H5zM13 15v3M8 19h10" fill="none" stroke="#e9eff3" strokeWidth="1.200" />
            <rect x="1" y="1" width="4" height="9" fill="#1f2f3a" stroke="#e9eff3" />
          </svg>
        </TrayCell>
        <TrayCell $w={30}>
          <svg width="22" height="22" viewBox="0 0 22 22">
            <path d="M2 8h3l4-4v14l-4-4H2zM12 8c2 2 2 4 0 6M15 5c3 4 3 8 0 12M18 3c4 5 4 11 0 16" fill="none" stroke="#e9eff3" strokeWidth="1.100" />
          </svg>
        </TrayCell>
        <TrayCell $w={28}>中</TrayCell>
        <Gap $w={6} />
        <TrayCell $w={32}>
          <ImeBox>拼</ImeBox>
        </TrayCell>
        <Clock>
          <ClockTime>17:39</ClockTime>
          <span>2021/1/</span>
        </Clock>
      </Taskbar>
    </Page>
  )
}

export default App
